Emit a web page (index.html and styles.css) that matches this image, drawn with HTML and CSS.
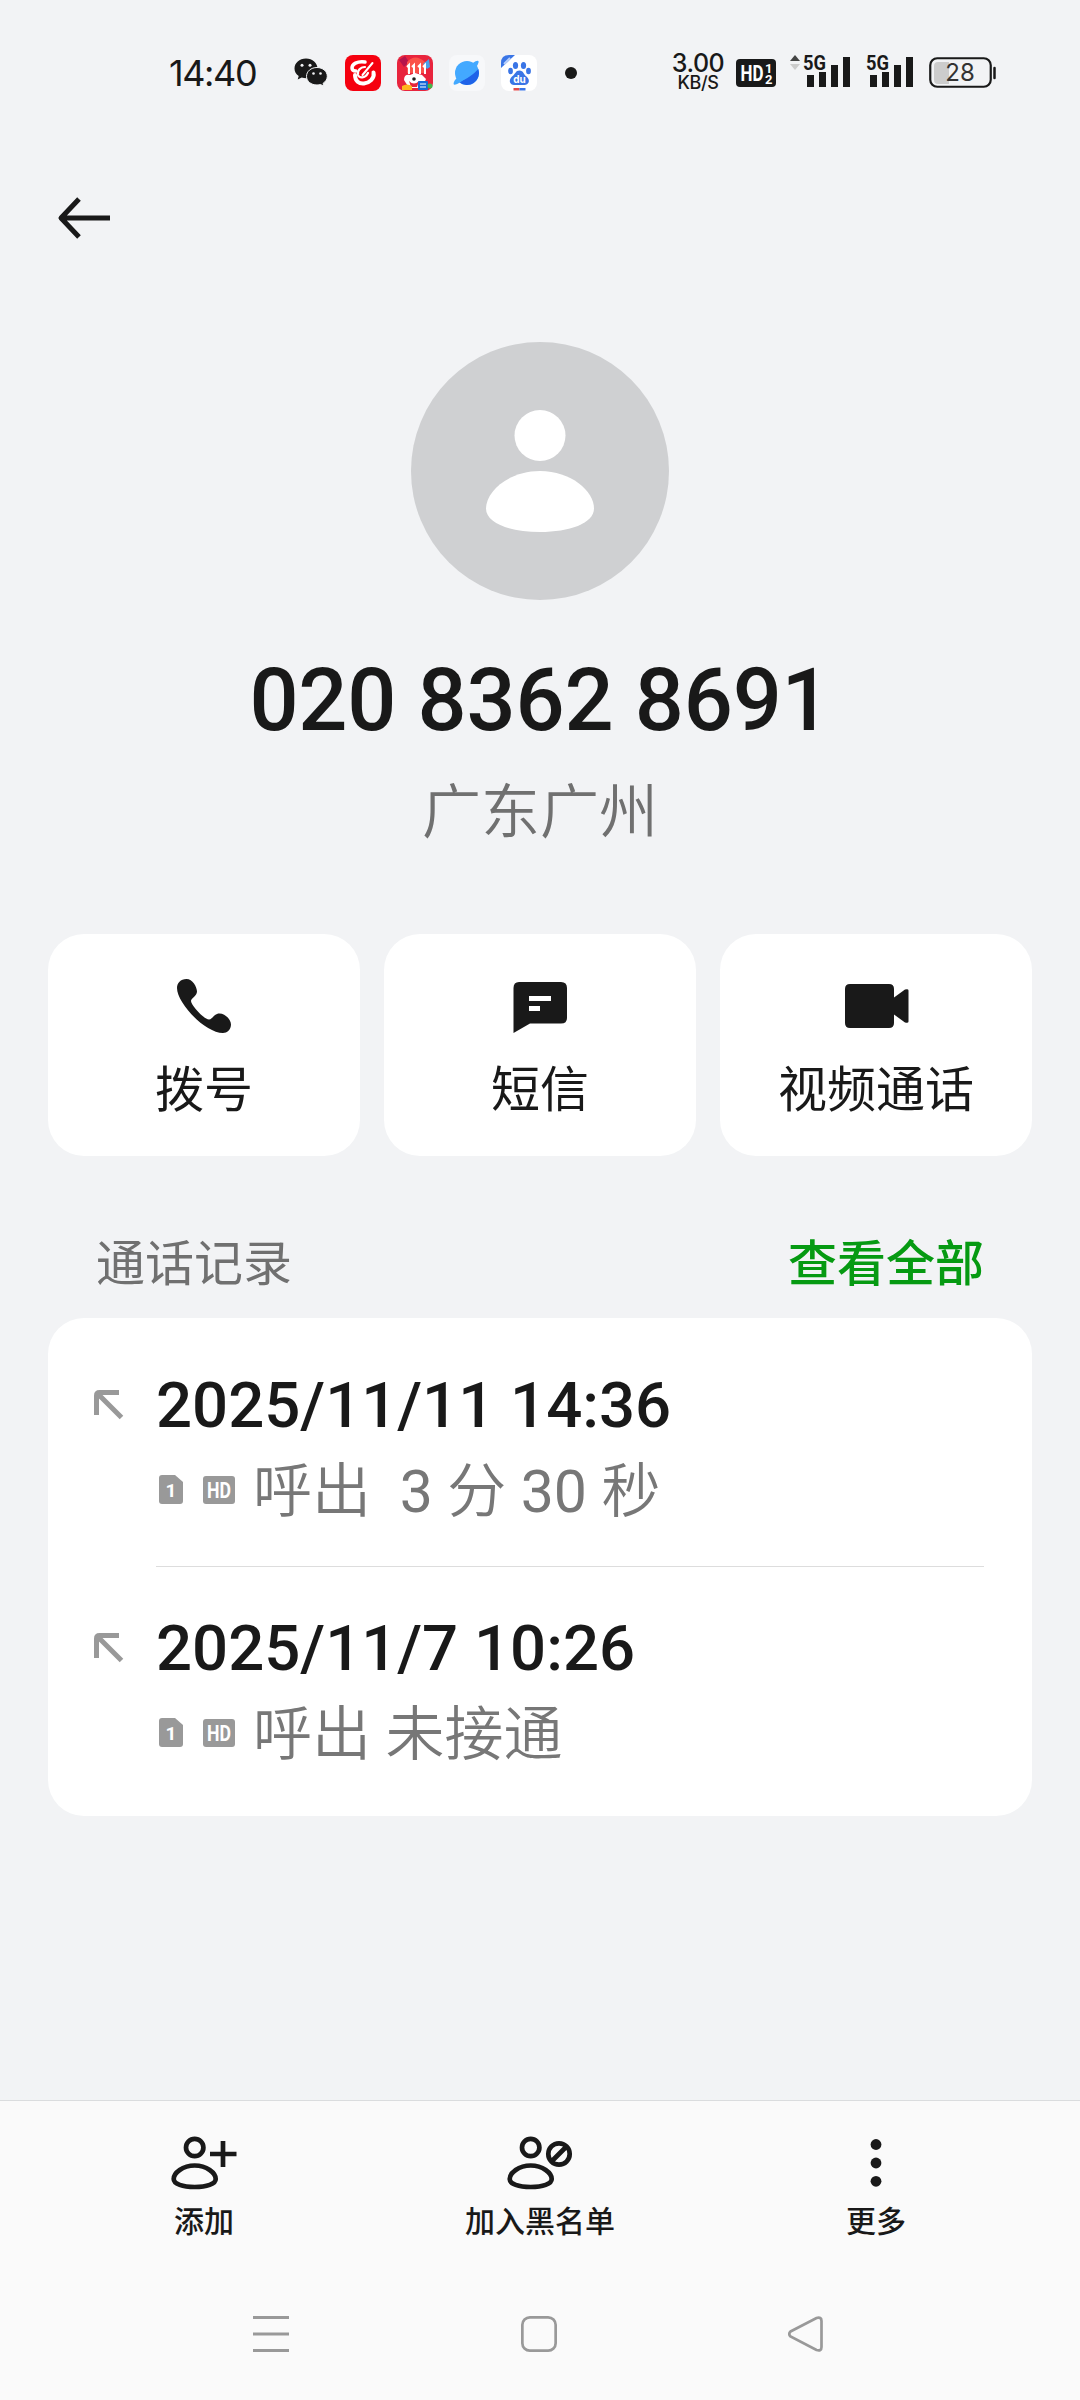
FILE: index.html
```html
<!DOCTYPE html>
<html lang="zh-CN">
<head>
<meta charset="utf-8">
<title>通话详情</title>
<link rel="stylesheet" href="styles.css">
</head>
<body>
<div class="screen">
  <header class="status">
    <span class="clock">14:40</span>
    <svg class="wechat" width="34" height="30" viewBox="0 0 34 30">
      <path d="M12 0.500C5.400.5 0.500 5 0.500 10.500c0 3.200 1.500 5.800 4.200 7.600l-1 3.400 4-2c1.500.5 3 .7 4.600.7 6-.2 11.200-4.500 11.200-9.700S18.500.5 12 .5Z" fill="#191919"/>
      <path d="M23 9.500c-6 0-10.500 3.900-10.500 8.800S17 27 23 27c1.300 0 2.500-.2 3.600-.5l3.200 1.800-.8-2.900c2.600-1.700 4.300-4.200 4.300-7.100 0-4.900-4.500-8.800-10.300-8.800Z" fill="#191919" stroke="#f2f3f5" stroke-width="1"/>
      <g fill="#f2f3f5"><circle cx="8" cy="7.200" r="1.500"/><circle cx="16" cy="7.200" r="1.500"/><circle cx="19.500" cy="15.500" r="1.300"/><circle cx="26.500" cy="15.500" r="1.300"/></g>
    </svg>
    <svg class="app" width="36" height="36" viewBox="0 0 36 36" fill="none" stroke-linecap="round">
      <rect width="36" height="36" rx="8" fill="#f5000f"/>
      <path d="M20 7C12 6 7 9 7 13q0 3 4 3" stroke="#fff" stroke-width="3.500"/>
      <path d="M10 20C10 26 14 29 19 28.500s11-5 9.500-11" stroke="#fff" stroke-width="4"/>
      <path d="M20 12c-5 0-8 4-7 8 1 3 7 4 10-2" stroke="#fff" stroke-width="2.200"/>
      <path d="M27.500 8L17.500 20" stroke="#fff" stroke-width="2"/>
    </svg>
    <svg class="app" width="36" height="36" viewBox="0 0 36 36">
      <rect width="36" height="36" rx="8" fill="#e8243d"/>
      <path d="M2 5L8 1l4 6-5 5Z" fill="#b5144a"/>
      <path d="M10 7q8-9 18 0v11H10Z" fill="#fb5148"/>
      <path d="M26 9l6-5 1 8-3 2Z" fill="#47a0eb"/>
      <path d="M10 12l2-2v9M15 12l2-2v9M21 12l2-2v9M26 12l2-2v9" fill="none" stroke="#fff" stroke-width="2"/>
      <path d="M7 25q0-6 6-5l5-2 7 2 4 4-4 9H12Z" fill="#fff"/>
      <path d="M12 26q5 5 10 0l-2 6h-6Z" fill="#e6273b"/><circle cx="17" cy="24" r="1.800" fill="#222"/>
      <rect x="21" y="26" width="10" height="9" rx="1" fill="#1769d8"/><path d="M23 29h6M23 32h6" stroke="#fff" stroke-width="1.200"/>
      <path d="M5 35v-4q5-3 10 0v4Z" fill="#ffb61d"/><circle cx="33" cy="31" r="2.500" fill="#43b649"/>
    </svg>
    <svg class="app" width="36" height="36" viewBox="0 0 36 36">
      <rect width="36" height="36" rx="8" fill="#f7f8fa"/>
      <circle cx="18" cy="18" r="12" fill="#43a9ff"/>
      <path d="M29.300 14A12 12 0 0 1 10 27C18 24 25 19 29.300 14Z" fill="#1f62e8"/>
      <path d="M24 8c4-3 7-3 5 1C26 16 17 24 10 28c-5 3-7 2-4-3Z" fill="#43a9ff"/>
    </svg>
    <svg class="app" width="36" height="36" viewBox="0 0 36 36">
      <rect width="36" height="36" rx="8" fill="#fff"/>
      <path d="M0 13V8Q0 0 8 0h6Z" fill="#3a75e6"/><path d="M3 9l6-6" stroke="#b8cffa" stroke-width="2"/>
      <g fill="#3a75e6"><ellipse cx="14.500" cy="10.500" rx="2.600" ry="3.600"/><ellipse cx="22.500" cy="10.500" rx="2.600" ry="3.600"/><ellipse cx="9.500" cy="16" rx="2.400" ry="3.200"/><ellipse cx="27.500" cy="16" rx="2.400" ry="3.200"/><path d="M18.500 15.500c4 0 4 4 7 6 4.500 4 2 8.500-2 8.500H13c-4 0-6-4.500-2-8.500 4-3 3.500-6 7.500-6Z"/></g>
      <text class="du" x="18.500" y="28" text-anchor="middle">du</text>
      <rect x="12.500" y="33" width="6" height="2.500" fill="#e14b4b"/><rect x="18.500" y="33" width="6" height="2.500" fill="#3a75e6"/>
    </svg>
    <span class="more-dot"></span>
    <div class="speed"><span class="speed-value">3.00</span><span class="speed-unit">KB/S</span></div>
    <svg class="hd-status" width="40" height="28" viewBox="0 0 40 28">
      <rect width="40" height="28" rx="4" fill="#191919"/>
      <text class="hd-text" x="4.500" y="22" textLength="23" lengthAdjust="spacingAndGlyphs">HD</text>
      <text class="hd-num" x="29" y="13.500">1</text><text class="hd-num" x="29" y="25">2</text>
    </svg>
    <svg class="signal-a" width="60" height="44" viewBox="0 -4 60 44">
      <path d="M0 8l5-6 5 6Z" fill="#444"/><path d="M0 11h10l-5 6Z" fill="#ccc"/>
      <text class="net" x="13" y="17" textLength="23" lengthAdjust="spacingAndGlyphs">5G</text>
      <path d="M17 22h7v12h-7ZM29 19h7v15h-7ZM41 12h7v22h-7ZM53 4h7v30h-7Z" fill="#191919"/>
    </svg>
    <svg class="signal-b" width="47" height="44" viewBox="0 -4 47 44">
      <text class="net" x="0" y="17" textLength="23" lengthAdjust="spacingAndGlyphs">5G</text>
      <path d="M4 22h7v12H4ZM16 19h7v15h-7ZM28 12h7v22h-7ZM40 4h7v30h-7Z" fill="#191919"/>
    </svg>
    <svg class="battery" width="68" height="32" viewBox="0 0 68 32">
      <path d="M20 5H9q-4 0-4 4v14q0 4 4 4h11Z" fill="#ccc"/>
      <rect x="1.250" y="1.250" width="60.500" height="28.500" rx="7" fill="none" stroke="#191919" stroke-width="2.200"/>
      <path d="M65.500 11v10" stroke="#191919" stroke-width="2.500" stroke-linecap="round"/>
      <text class="battery-text" x="31" y="24" text-anchor="middle">28</text>
    </svg>
  </header>

  <div class="toolbar">
    <svg width="54" height="42" viewBox="0 0 54 42" fill="none" stroke="#191919" stroke-width="5">
      <path d="M53 21H4M22 2L4 21l18 19" stroke-linejoin="round"/>
    </svg>
  </div>

  <section class="profile">
    <svg width="258" height="258" viewBox="0 0 258 258">
      <circle cx="129" cy="129" r="129" fill="#cfd0d2"/>
      <circle cx="129" cy="93.500" r="25.500" fill="#fff"/>
      <path d="M129 129c31 0 54 20 54 37.500 0 15-25 23.500-54 23.500s-54-8.500-54-23.500C75 149 98 129 129 129Z" fill="#fff"/>
    </svg>
    <h1 class="number">020 8362 8691</h1>
    <p class="place">广东广州</p>
  </section>

  <section class="actions">
    <div class="action">
      <svg width="60" height="60" viewBox="0 0 60 60"><path d="M12.500 3c6 0 10.500 8 10.500 12.500 0 4.500-6 7-6 9.500 0 4 13 18.500 18 18.500 3.500 0 5-6 10.500-6S57 43.500 57 48.500 53 57 49 57C31 57 3 27 3 12c0-5 3.500-9 9.500-9Z" fill="#191919"/></svg>
      <span>拨号</span>
    </div>
    <div class="action">
      <svg width="60" height="60" viewBox="0 0 60 60"><path fill-rule="evenodd" d="M9 6h42q6 0 6 6v30q0 5.500-6 5.500H20L3.500 57V12Q3.500 6 9 6ZM19 20v5h22v-5ZM19 30v5h11v-5Z" fill="#191919"/></svg>
      <span>短信</span>
    </div>
    <div class="action">
      <svg width="66" height="60" viewBox="0 0 66 60"><path d="M7 8h39q5 0 5 5v8.500l11-8q3.500-1 3.500 1v31q0 2-3.500 1l-11-8V47q0 5-5 5H7q-5 0-5-5V13q0-5 5-5Z" fill="#191919"/></svg>
      <span>视频通话</span>
    </div>
  </section>

  <div class="log-head"><span>通话记录</span><a class="see-all">查看全部</a></div>

  <section class="log">
    <div class="entry">
      <svg class="out" width="30" height="30" viewBox="0 0 30 30" fill="none" stroke="#999" stroke-width="5"><path d="M2.500 25V5.500q0-3 3-3H25M4 4l23.500 23.500"/></svg>
      <div class="entry-body">
        <div class="date">2025/11/11 14:36</div>
        <div class="detail">
          <svg class="sim" width="24" height="30" viewBox="0 0 24 30"><path d="M3 0h13l8 7v19q0 3-3 3H3q-3 0-3-3V3q0-3 3-3Z" fill="#999"/><text class="sim-text" x="12" y="22" text-anchor="middle">1</text></svg>
          <svg class="hd" width="32" height="28" viewBox="0 0 32 28"><rect width="32" height="28" rx="3" fill="#999"/><text class="hd-small" x="4" y="22" textLength="24" lengthAdjust="spacingAndGlyphs">HD</text></svg>
          <span>呼出&nbsp; <span class="digits">3</span> 分 <span class="digits">30</span> 秒</span>
        </div>
      </div>
    </div>
    <div class="entry">
      <svg class="out" width="30" height="30" viewBox="0 0 30 30" fill="none" stroke="#999" stroke-width="5"><path d="M2.500 25V5.500q0-3 3-3H25M4 4l23.500 23.500"/></svg>
      <div class="entry-body">
        <div class="date">2025/11/7 10:26</div>
        <div class="detail">
          <svg class="sim" width="24" height="30" viewBox="0 0 24 30"><path d="M3 0h13l8 7v19q0 3-3 3H3q-3 0-3-3V3q0-3 3-3Z" fill="#999"/><text class="sim-text" x="12" y="22" text-anchor="middle">1</text></svg>
          <svg class="hd" width="32" height="28" viewBox="0 0 32 28"><rect width="32" height="28" rx="3" fill="#999"/><text class="hd-small" x="4" y="22" textLength="24" lengthAdjust="spacingAndGlyphs">HD</text></svg>
          <span>呼出 未接通</span>
        </div>
      </div>
    </div>
  </section>

  <footer class="bottom">
    <div class="tabs">
      <div class="tab">
        <svg width="66" height="56" viewBox="0 0 66 56" fill="none" stroke="#191919" stroke-width="4.700"><circle cx="23.700" cy="13.500" r="8.700"/><path d="M23.700 31.500c12 0 21 7.500 21 13.500 0 5-9 8-21 8s-21-3-21-8c0-6 9-13.500 21-13.500ZM52 7v26M39 20h26.500"/></svg>
        <span>添加</span>
      </div>
      <div class="tab">
        <svg width="66" height="56" viewBox="0 0 66 56" fill="none" stroke="#191919" stroke-width="4.700"><circle cx="23.700" cy="13.500" r="8.700"/><path d="M23.700 31.500c12 0 21 7.500 21 13.500 0 5-9 8-21 8s-21-3-21-8c0-6 9-13.500 21-13.500ZM44.500 27.500l15-15"/><circle cx="52" cy="20" r="10.700"/></svg>
        <span>加入黑名单</span>
      </div>
      <div class="tab">
        <svg width="66" height="56" viewBox="0 0 66 56" fill="#191919"><circle cx="33" cy="10.500" r="5.400"/><circle cx="33" cy="29" r="5.400"/><circle cx="33" cy="47.300" r="5.400"/></svg>
        <span>更多</span>
      </div>
    </div>
    <nav class="nav">
      <svg width="36" height="36" viewBox="0 0 36 36" stroke="#999" stroke-width="3"><path d="M0 1.500h36M0 18h36M0 34.500h36"/></svg>
      <svg width="36" height="36" viewBox="0 0 36 36" fill="none" stroke="#999" stroke-width="2.700"><rect x="1.350" y="1.350" width="33.300" height="33.300" rx="7.500"/></svg>
      <svg width="36" height="36" viewBox="0 0 36 36" fill="none" stroke="#999" stroke-width="2.700"><path d="M2.500 15.500L28.500 2Q33.500.5 33.500 5v26q0 4.500-5 3L2.500 20.500Q0 18 2.500 15.500Z"/></svg>
    </nav>
  </footer>
</div>
</body>
</html>
```
FILE: styles.css
```css
* { box-sizing: border-box; }
body { margin: 0; }
h1, p { margin: 0; }
svg { display: block; flex: none; }

.screen {
  width: 1080px;
  height: 2400px;
  display: flex;
  flex-direction: column;
  background: #f2f3f5;
  color: #191919;
  font-family: "Noto Sans CJK SC", sans-serif;
  overflow: hidden;
}

/* Status bar */
.status { height: 146px; display: flex; align-items: center; padding-left: 169px; flex: none; }
.clock { width: 125px; font: 400 36px/40px Inter, sans-serif; letter-spacing: -1.4px; white-space: nowrap; }
.wechat { margin-right: 17px; }
.app { margin-right: 16px; }
.more-dot { width: 12px; height: 12px; border-radius: 50%; background: #191919; margin-left: 12px; }
.speed { width: 56px; margin-left: 93px; margin-right: 10px; display: flex; flex-direction: column; align-items: center; font-family: Inter, sans-serif; font-weight: 500; white-space: nowrap; }
.speed-value { font-size: 25px; line-height: 20px; letter-spacing: -0.5px; }
.speed-unit { font-size: 18px; line-height: 20px; letter-spacing: -0.4px; }
.signal-a { margin-left: 14px; }
.signal-b { margin-left: 16px; }
.signal-a, .signal-b { margin-top: -4px; }
.battery { margin-left: 16px; }
.du { font: 700 10px Inter, sans-serif; fill: #fff; }
.hd-text { font: 700 22px Roboto, sans-serif; fill: #fff; }
.hd-num { font: 700 13px Roboto, sans-serif; fill: #fff; }
.net { font: 700 21px Roboto, sans-serif; fill: #191919; }
.battery-text { font: 400 24px Inter, sans-serif; fill: #333; }

.toolbar { height: 196px; padding: 51px 0 0 57px; flex: none; }

/* Contact */
.profile { display: flex; flex-direction: column; align-items: center; }
.number { margin-top: 51px; font: 500 86.500px/100px Roboto, sans-serif; letter-spacing: -0.2px; }
.place { margin-top: 17px; font-size: 59px; line-height: 80px; font-weight: 350; color: #707070; }

.actions { display: grid; grid-template-columns: repeat(3, 1fr); gap: 24px; margin: 86px 48px 0; }
.action { height: 222px; padding-top: 42px; border-radius: 36px; background: #fff; display: flex; flex-direction: column; align-items: center; gap: 20px; font-size: 49px; line-height: 60px; }

/* Call history */
.log-head { margin: 74px 96px 28px; display: flex; justify-content: space-between; font-size: 49px; line-height: 60px; color: #707070; }
.see-all { color: #069a12; font-weight: 500; }
.log { height: 498px; margin: 0 48px; border-radius: 36px; background: #fff; }
.entry { display: flex; padding: 0 48px 0 46px; }
.out { margin-top: 72px; }
.entry-body { flex: 1; margin-left: 32px; height: 249px; padding-top: 53px; border-bottom: 1px solid #ddd; }
.entry + .entry .entry-body { border: 0; padding-top: 47px; }
.entry + .entry .out { margin-top: 66px; }
.date { font: 500 63.500px/70px Roboto, sans-serif; }
.detail { margin-top: 16px; padding-left: 3px; display: flex; align-items: center; font: 350 59px/70px Roboto, "Noto Sans CJK SC", sans-serif; color: #777; white-space: nowrap; }
.digits { font-weight: 400; }
.sim, .hd { margin-top: -5px; }
.hd { margin-left: 20px; margin-right: 18px; }
.sim-text { font: 700 19px Roboto, sans-serif; fill: #fff; }
.hd-small { font: 700 22px Roboto, sans-serif; fill: #fff; }

/* Bottom bars */
.bottom { margin-top: auto; height: 300px; background: #fafafa; border-top: 1px solid #dadcde; }
.tabs { display: grid; grid-template-columns: repeat(3, 336px); justify-content: center; padding-top: 33px; }
.tab { display: flex; flex-direction: column; align-items: center; gap: 9px; font-size: 30px; line-height: 40px; font-weight: 500; }
.nav { display: flex; justify-content: space-between; padding: 77px 256px 0 253px; }
```
